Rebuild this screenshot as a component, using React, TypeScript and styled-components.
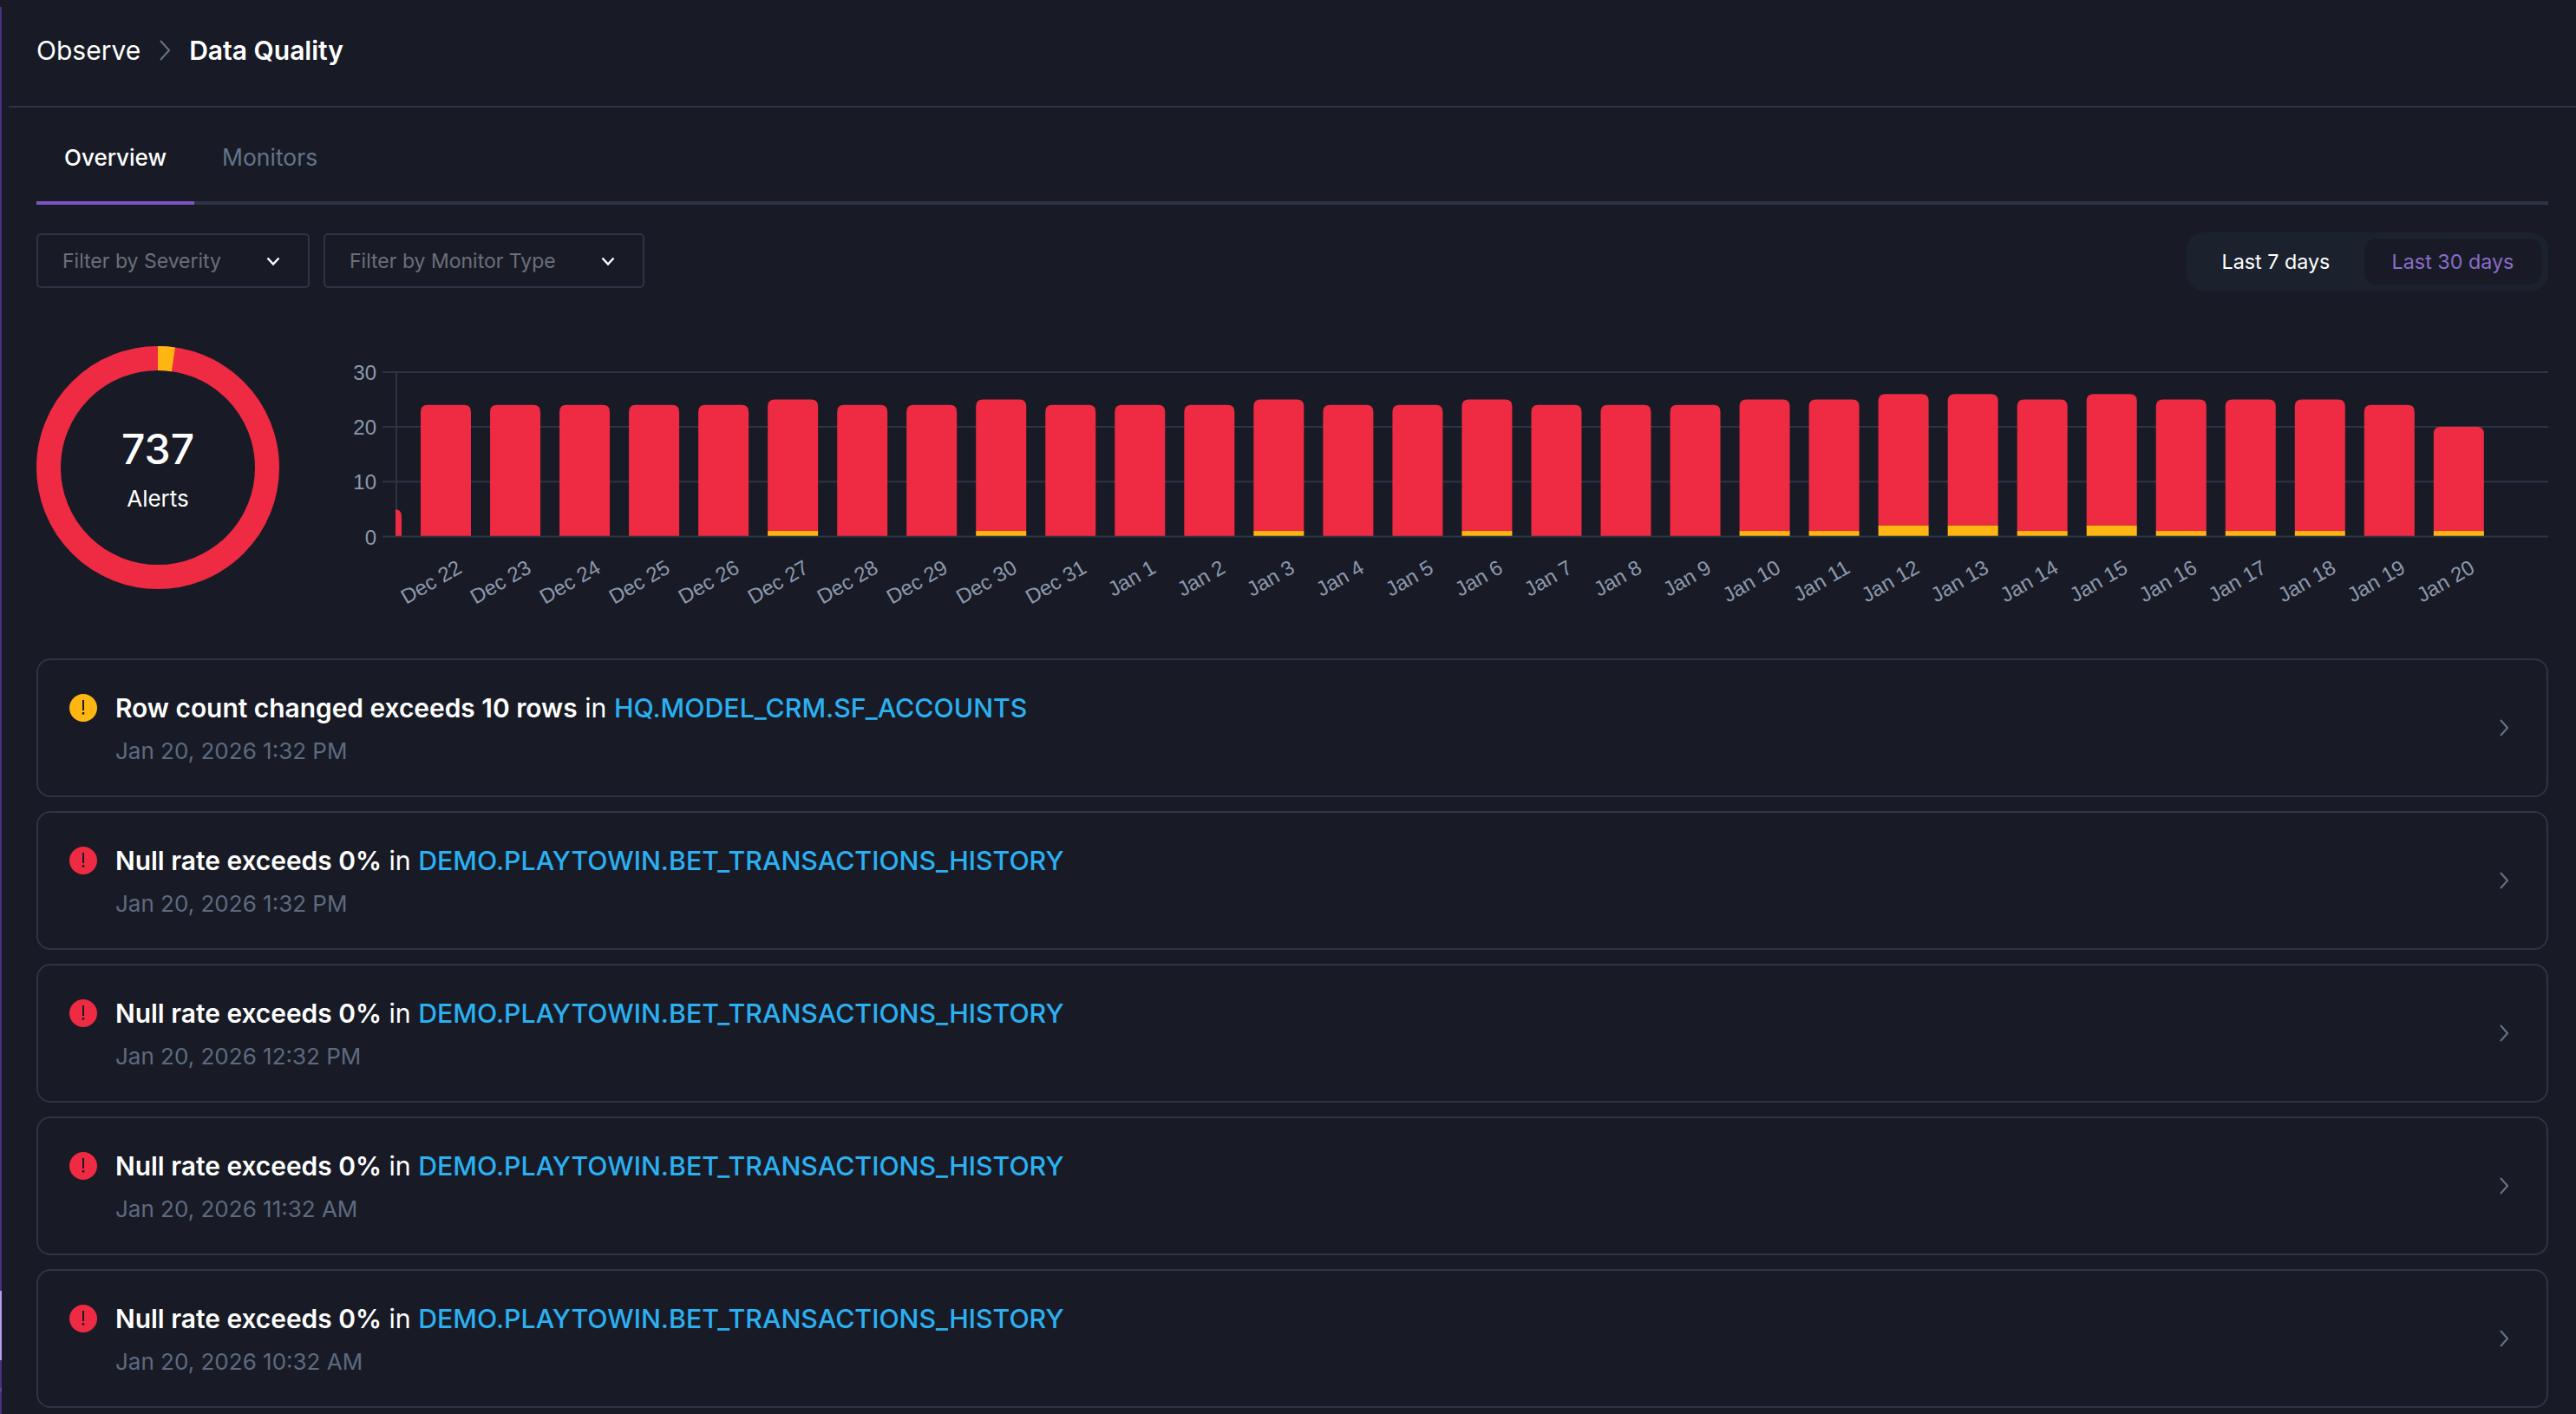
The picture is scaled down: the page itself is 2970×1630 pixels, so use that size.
import React from 'react';
import styled, { createGlobalStyle } from 'styled-components';

const GlobalStyle = createGlobalStyle`
  html, body {
    margin: 0;
    padding: 0;
    background: #181b25;
  }
  body {
    font-family: Inter, "Liberation Sans", sans-serif;
    -webkit-font-smoothing: antialiased;
  }
`;

const Page = styled.div`
  display: flex;
  width: 2970px;
  height: 1630px;
  overflow: hidden;
  background: #181b25;
`;

const Rail = styled.div`
  width: 2px;
  flex-shrink: 0;
  display: flex;
  flex-direction: column;
  padding-top: 8px;
  box-sizing: border-box;
`;

const RailPart = styled.div<{ $h?: number; $color: string }>`
  flex: ${(p) => (p.$h ? `0 0 ${p.$h}px` : '1')};
  background: ${(p) => p.$color};
`;

const Main = styled.div`
  flex: 1;
  min-width: 0;
  display: flex;
  flex-direction: column;
`;

const Header = styled.div`
  height: 124px;
  box-sizing: border-box;
  margin-left: 8px;
  padding: 0 0 6px 32px;
  border-bottom: 2px solid #2c3446;
  display: flex;
  align-items: center;
  gap: 22px;
  font-size: 30px;
  line-height: 36px;
  color: #fff;
`;

const Crumb = styled.span<{ $current?: boolean }>`
  font-weight: ${(p) => (p.$current ? 600 : 400)};
`;

const Content = styled.div`
  padding: 0 32px 0 40px;
  display: flex;
  flex-direction: column;
`;

const Tabs = styled.div`
  height: 112px;
  box-sizing: border-box;
  border-bottom: 4px solid #2c3446;
  display: flex;
`;

const Tab = styled.div<{ $active?: boolean }>`
  height: 112px;
  box-sizing: border-box;
  padding: 6px 32px 0;
  display: flex;
  align-items: center;
  font-size: ${(p) => (p.$active ? 26 : 26.5)}px;
  font-weight: ${(p) => (p.$active ? 500 : 400)};
  color: ${(p) => (p.$active ? '#fff' : '#64748b')};
  border-bottom: 4px solid ${(p) => (p.$active ? '#7c55c4' : 'transparent')};
`;

const FilterRow = styled.div`
  margin-top: 32px;
  height: 67px;
  display: flex;
  align-items: flex-start;
  gap: 16px;
`;

const Filter = styled.div<{ $width: number }>`
  width: ${(p) => p.$width}px;
  height: 63px;
  margin-top: 1px;
  box-sizing: border-box;
  border: 2px solid #2c3446;
  border-radius: 5px;
  padding: 0 32px 0 28px;
  display: flex;
  align-items: center;
  justify-content: space-between;
  font-size: 23px;
  color: #6b6f7b;
`;

const Segmented = styled.div`
  margin-left: auto;
  height: 67px;
  width: 417px;
  box-sizing: border-box;
  padding: 7px 8px;
  border-radius: 20px;
  background: #1b222e;
  display: flex;
  justify-content: space-between;
  font-size: 23.3px;
`;

const Segment = styled.div<{ $active?: boolean }>`
  height: 53px;
  width: ${(p) => (p.$active ? 204 : 190)}px;
  border-radius: 14px;
  display: flex;
  align-items: center;
  justify-content: center;
  background: ${(p) => (p.$active ? '#181b25' : 'transparent')};
  color: ${(p) => (p.$active ? '#8a6cc9' : '#fff')};
`;

const ChartRow = styled.div`
  margin-top: 64px;
  height: 340px;
  display: flex;
  gap: 78px;
`;

const Donut = styled.div`
  position: relative;
  width: 280px;
  height: 280px;
  flex-shrink: 0;
`;

const DonutCenter = styled.div`
  position: absolute;
  inset: 0;
  display: flex;
  flex-direction: column;
  align-items: center;
  justify-content: center;
  color: #fff;
`;

const DonutValue = styled.div`
  font-size: 48px;
  line-height: 60px;
  font-weight: 500;
`;

const DonutLabel = styled.div`
  font-size: 26px;
  line-height: 32px;
  margin-top: 11px;
`;

const ChartSvg = styled.svg`
  display: block;
  margin-top: 11px;
  width: 2538px;
  height: 329px;
`;

const AlertList = styled.div`
  margin-top: 20px;
  display: flex;
  flex-direction: column;
  gap: 16px;
`;

const AlertCard = styled.div`
  height: 160px;
  box-sizing: border-box;
  border: 2px solid #2c3446;
  border-radius: 16px;
  padding: 0 44px 0 36px;
  display: flex;
  align-items: center;
  justify-content: space-between;
`;

const AlertMain = styled.div`
  display: flex;
  align-items: flex-start;
  gap: 21px;
  padding-top: 4px;
`;

const AlertIcon = styled.svg`
  display: block;
  width: 32px;
  height: 32px;
  margin-top: 2px;
  flex-shrink: 0;
`;

const AlertTitle = styled.div`
  font-size: 30.3px;
  line-height: 36px;
  color: #fff;
`;

const Strong = styled.span`
  font-weight: 600;
  font-size: 29.9px;
`;

const TableLink = styled.span`
  color: #2bb0f2;
  font-weight: 500;
`;

const AlertDate = styled.div`
  margin-top: 14px;
  font-size: 26px;
  line-height: 36px;
  color: #5d6a80;
`;

const RED = '#ee2b42';
const YELLOW = '#ffb612';
const GRID = '#2c3446';
const AXIS_TEXT = '#8b98ad';

const Y_ZERO = 618.5;
const UNIT = 6.32;
const FIRST_BAR = 485;
const STEP = 80.03;
const BAR_W = 58;

// [date, total, warnings]
const days: [string, number, number][] = [
  ['Dec 22', 24, 0],
  ['Dec 23', 24, 0],
  ['Dec 24', 24, 0],
  ['Dec 25', 24, 0],
  ['Dec 26', 24, 0],
  ['Dec 27', 25, 1],
  ['Dec 28', 24, 0],
  ['Dec 29', 24, 0],
  ['Dec 30', 25, 1],
  ['Dec 31', 24, 0],
  ['Jan 1', 24, 0],
  ['Jan 2', 24, 0],
  ['Jan 3', 25, 1],
  ['Jan 4', 24, 0],
  ['Jan 5', 24, 0],
  ['Jan 6', 25, 1],
  ['Jan 7', 24, 0],
  ['Jan 8', 24, 0],
  ['Jan 9', 24, 0],
  ['Jan 10', 25, 1],
  ['Jan 11', 25, 1],
  ['Jan 12', 26, 2],
  ['Jan 13', 26, 2],
  ['Jan 14', 25, 1],
  ['Jan 15', 26, 2],
  ['Jan 16', 25, 1],
  ['Jan 17', 25, 1],
  ['Jan 18', 25, 1],
  ['Jan 19', 24, 0],
  ['Jan 20', 20, 1],
];

const alerts = [
  { level: 'warn', title: 'Row count changed exceeds 10 rows', table: 'HQ.MODEL_CRM.SF_ACCOUNTS', date: 'Jan 20, 2026 1:32 PM' },
  { level: 'error', title: 'Null rate exceeds 0%', table: 'DEMO.PLAYTOWIN.BET_TRANSACTIONS_HISTORY', date: 'Jan 20, 2026 1:32 PM' },
  { level: 'error', title: 'Null rate exceeds 0%', table: 'DEMO.PLAYTOWIN.BET_TRANSACTIONS_HISTORY', date: 'Jan 20, 2026 12:32 PM' },
  { level: 'error', title: 'Null rate exceeds 0%', table: 'DEMO.PLAYTOWIN.BET_TRANSACTIONS_HISTORY', date: 'Jan 20, 2026 11:32 AM' },
  { level: 'error', title: 'Null rate exceeds 0%', table: 'DEMO.PLAYTOWIN.BET_TRANSACTIONS_HISTORY', date: 'Jan 20, 2026 10:32 AM' },
];

const SelectChevron = () => (
  <svg width="16" height="12" viewBox="0 0 16 12" fill="none">
    <path d="M1.5 2.5 L8 9.5 L14.5 2.5" stroke="#fff" strokeWidth="2.4" />
  </svg>
);

const ThinChevron = ({ w, h }: { w: number; h: number }) => (
  <svg width={w} height={h} viewBox={`0 0 ${w} ${h}`} fill="none" style={{ flexShrink: 0 }}>
    <path d={`M1 1 L${w - 1} ${h / 2} L1 ${h - 1}`} stroke="#64748b" strokeWidth="2" />
  </svg>
);

const StatusIcon = ({ color }: { color: string }) => (
  <AlertIcon viewBox="0 0 32 32">
    <circle cx="16" cy="16" r="16" fill={color} />
    <rect x="15" y="7" width="2" height="12" fill="#181b25" />
    <rect x="14.8" y="21" width="2.4" height="2.6" fill="#181b25" />
  </AlertIcon>
);

const topRounded = (x: number, w: number, top: number, bottom: number, r: number) =>
  `M${x} ${bottom} L${x} ${top + r} Q${x} ${top} ${x + r} ${top} L${x + w - r} ${top} Q${x + w} ${top} ${x + w} ${top + r} L${x + w} ${bottom} Z`;

const BarChart = () => (
  <ChartSvg viewBox="400 410 2538 329">
    {[30, 20, 10, 0].map((v) => (
      <g key={v}>
        <line x1="441" x2="2938" y1={Y_ZERO - v * UNIT} y2={Y_ZERO - v * UNIT} stroke={GRID} strokeWidth="2" />
        <text
          x="434"
          y={Y_ZERO - v * UNIT + 9}
          textAnchor="end"
          fontFamily="Liberation Sans, sans-serif"
          fontSize="24"
          fill={AXIS_TEXT}
        >
          {v}
        </text>
      </g>
    ))}
    <line x1="457" x2="457" y1={Y_ZERO - 30 * UNIT} y2={Y_ZERO} stroke={GRID} strokeWidth="2" />
    <path d="M456 617.7 L456 587.5 L458 587.5 Q463 589 463 595 L463 617.7 Z" fill={RED} />
    {days.map(([label, total, warn], i) => {
      const x = FIRST_BAR + i * STEP;
      const base = 617.7;
      const split = base - warn * UNIT + (warn ? 0.7 : 0);
      const top = Y_ZERO - total * UNIT;
      const ax = 534 + i * STEP;
      const ay = 659;
      return (
        <g key={label}>
          <path d={topRounded(x, BAR_W, top, split, 8)} fill={RED} />
          {warn > 0 && <rect x={x} y={split} width={BAR_W} height={base - split} fill={YELLOW} />}
          <text
            x={ax}
            y={ay}
            textAnchor="end"
            transform={`rotate(-30 ${ax} ${ay})`}
            fontFamily="Liberation Sans, sans-serif"
            fontSize="24"
            fill={AXIS_TEXT}
          >
            {label}
          </text>
        </g>
      );
    })}
  </ChartSvg>
);

const App: React.FC = () => (
  <Page>
    <GlobalStyle />
    <Rail>
      <RailPart $h={1480} $color="#4a2f85" />
      <RailPart $h={80} $color="#b49cf0" />
      <RailPart $h={32} $color="#4a2f85" />
      <RailPart $h={4} $color="#5b4a7d" />
      <RailPart $color="#4a2f85" />
    </Rail>
    <Main>
      <Header>
        <Crumb>Observe</Crumb>
        <ThinChevron w={12} h={24} />
        <Crumb $current>Data Quality</Crumb>
      </Header>
      <Content>
        <Tabs>
          <Tab $active>Overview</Tab>
          <Tab>Monitors</Tab>
        </Tabs>
        <FilterRow>
          <Filter $width={315}>
            Filter by Severity
            <SelectChevron />
          </Filter>
          <Filter $width={370}>
            Filter by Monitor Type
            <SelectChevron />
          </Filter>
          <Segmented>
            <Segment>Last 7 days</Segment>
            <Segment $active>Last 30 days</Segment>
          </Segmented>
        </FilterRow>
        <ChartRow>
          <Donut>
            <svg width="280" height="280" viewBox="0 0 280 280" fill="none">
              <circle cx="140" cy="140" r="126" stroke={RED} strokeWidth="28" />
              <circle
                cx="140"
                cy="140"
                r="126"
                stroke={YELLOW}
                strokeWidth="28"
                strokeDasharray="18 774"
                transform="rotate(-90 140 140)"
              />
            </svg>
            <DonutCenter>
              <DonutValue>737</DonutValue>
              <DonutLabel>Alerts</DonutLabel>
            </DonutCenter>
          </Donut>
          <BarChart />
        </ChartRow>
        <AlertList>
          {alerts.map((a, i) => (
            <AlertCard key={i}>
              <AlertMain>
                <StatusIcon color={a.level === 'warn' ? YELLOW : RED} />
                <div>
                  <AlertTitle>
                    <Strong>{a.title}</Strong> in <TableLink>{a.table}</TableLink>
                  </AlertTitle>
                  <AlertDate>{a.date}</AlertDate>
                </div>
              </AlertMain>
              <ThinChevron w={10} h={20} />
            </AlertCard>
          ))}
        </AlertList>
      </Content>
    </Main>
  </Page>
);

export default App;
